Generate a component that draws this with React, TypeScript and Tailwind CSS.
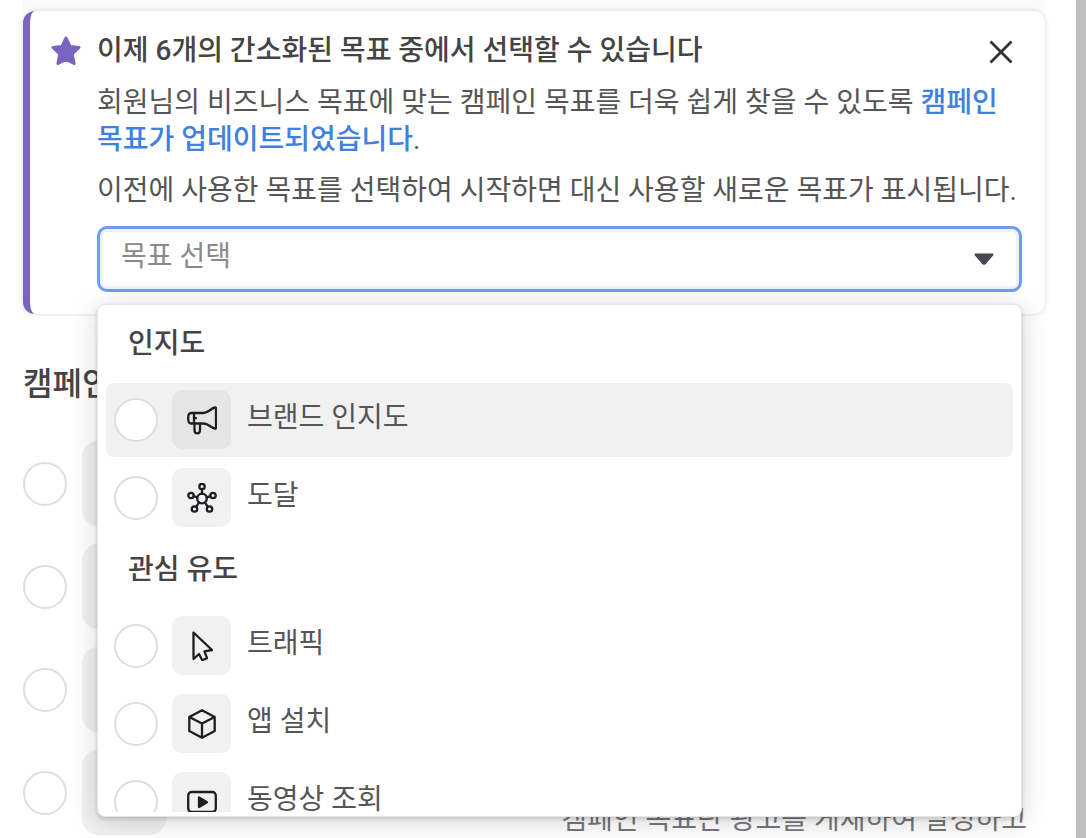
import { useState } from 'react'
import type { ReactNode } from 'react'

interface Objective {
  id: string
  label: string
  icon: ReactNode
}

interface ObjectiveGroup {
  title: string
  items: Objective[]
}

function LineIcon({ children }: { children: ReactNode }) {
  return (
    <svg
      viewBox="0 0 30 30"
      className="size-[30px]"
      fill="none"
      stroke="currentColor"
      strokeWidth={2.3}
      strokeLinecap="round"
      strokeLinejoin="round"
      aria-hidden="true"
    >
      {children}
    </svg>
  )
}

const groups: ObjectiveGroup[] = [
  {
    title: '인지도',
    items: [
      {
        id: 'brand',
        label: '브랜드 인지도',
        icon: (
          <LineIcon>
            <path d="M7 8h9.500c5 0 7.500-4.800 11.500-5.500q1-.2 1 1v19q0 1.200-1 1C24 22.800 21.500 18.500 16.500 18.500H4C2 18.500 1.200 16.500 1.200 13.200S2 8 4 8H7Zm0 0v10.500M7 13.200h2M7.500 18.500V25c0 4.500 5.500 4.500 5.500 0v-6.500" />
          </LineIcon>
        ),
      },
      {
        id: 'reach',
        label: '도달',
        icon: (
          <LineIcon>
            <circle cx="15" cy="15.500" r="4.800" />
            <circle cx="15" cy="3.500" r="2.700" />
            <circle cx="4" cy="12.500" r="2.700" />
            <circle cx="26" cy="12.500" r="2.700" />
            <circle cx="7.500" cy="26" r="2.700" />
            <circle cx="22.500" cy="26" r="2.700" />
            <path d="M15 6.200v4.500M6.700 13.200l3.600 1.100M23.300 13.200l-3.600 1.100M9.200 23.800l2.900-4.400M20.800 23.800l-2.900-4.400" />
          </LineIcon>
        ),
      },
    ],
  },
  {
    title: '관심 유도',
    items: [
      {
        id: 'traffic',
        label: '트래픽',
        icon: (
          <LineIcon>
            <path d="M6.500 1.500v26.500l5.500-5 3.300 6.200 4.700-2-2.500-6.800 7.500-1.400Z" />
          </LineIcon>
        ),
      },
      {
        id: 'app',
        label: '앱 설치',
        icon: (
          <LineIcon>
            <path d="M15 1.200 27.700 8v14L15 28.800 2.300 22V8ZM2.300 8 15 14.500 27.700 8M15 14.500v14.300" />
          </LineIcon>
        ),
      },
      {
        id: 'video',
        label: '동영상 조회',
        icon: (
          <LineIcon>
            <rect x="1.200" y="5" width="27.600" height="20" rx="3.500" />
            <path d="M12 10.500v9.500l8-4.700Z" fill="currentColor" />
          </LineIcon>
        ),
      },
    ],
  },
]

const campaignRows = [1, 2, 3, 4]

const radioClass = 'size-11 shrink-0 appearance-none rounded-full border-2 border-[#dedede] bg-white checked:border-[#1b74e4]'

function ObjectiveMenu({ highlighted, onHighlight }: { highlighted: string; onHighlight: (id: string) => void }) {
  return (
    <div className="absolute top-full left-0 right-0 z-10 mt-3 rounded-lg border border-[#e6e6e6] bg-white pb-1 shadow-[0_2px_4px_rgba(0,0,0,0.16),0_4px_28px_rgba(0,0,0,0.16)]">
      <div className="flex max-h-[507px] flex-col gap-1 overflow-hidden px-2 pt-2">
        {groups.map(group => (
          <section key={group.title} className="flex flex-col gap-1">
            <h3 className="flex h-[66px] shrink-0 items-center pb-1.5 pl-[22px] font-medium text-[#444]">{group.title}</h3>
            {group.items.map(item => {
              const active = item.id === highlighted
              return (
                <label
                  key={item.id}
                  onMouseEnter={() => onHighlight(item.id)}
                  className={`flex h-[74px] shrink-0 items-center rounded-lg px-2 pb-px ${active ? 'bg-[#f1f1f1]' : ''}`}
                >
                  <input type="radio" name="previous-objective" className={radioClass} />
                  <span
                    className={`ml-3.5 flex size-[59px] shrink-0 items-center justify-center rounded-[10px] text-[#1c1e21] ${
                      active ? 'bg-[#e5e5e5]' : 'bg-[#f1f1f1]'
                    }`}
                  >
                    {item.icon}
                  </span>
                  <span className="ml-4 pb-1">{item.label}</span>
                </label>
              )
            })}
          </section>
        ))}
      </div>
    </div>
  )
}

export default function App() {
  const [highlighted, setHighlighted] = useState('brand')

  return (
    <div className="flex h-screen overflow-hidden bg-white font-[Roboto,'Noto_Sans_CJK_KR',sans-serif] text-[28px] leading-[37px] text-[#555]">
      <main className="min-w-0 flex-1 pr-[31px] pl-[23px]">
        <div className="h-[11px] bg-[#fafafa]" />

        <section className="relative flex rounded-xl border-l-[7px] border-[#7b64c0] bg-white pt-[21px] pr-[23px] pb-[22px] pl-[21px] shadow-[0_0_5px_rgba(0,0,0,0.16)]">
          <svg viewBox="0 0 30 30" className="mt-1 size-[30px] shrink-0 text-[#7b64c0]" aria-hidden="true">
            <path
              d="m15 2 4 8.400 9 1-6.800 6.500 1.900 9.600L15 23.300l-8.100 4.200 1.900-9.600L2 11.400l9-1Z"
              fill="currentColor"
              stroke="currentColor"
              strokeWidth={3}
              strokeLinejoin="round"
            />
          </svg>

          <div className="ml-4 min-w-0 flex-1">
            <div className="flex justify-between">
              <h2 className="font-medium text-[#444]">이제 6개의 간소화된 목표 중에서 선택할 수 있습니다</h2>
              <button type="button" aria-label="닫기" className="mr-[7px] flex h-10 w-7 items-center justify-center">
                <svg viewBox="0 0 24 24" className="size-6" fill="none" stroke="#333" strokeWidth={2.8} aria-hidden="true">
                  <path d="m1.500 1.500 21 21M22.500 1.500l-21 21" />
                </svg>
              </button>
            </div>
            <p className="mt-3 break-keep">
              회원님의 비즈니스 목표에 맞는 캠페인 목표를 더욱 쉽게 찾을 수 있도록{' '}
              <a href="#update" className="font-medium text-[#4080e0]">캠페인 목표가 업데이트되었습니다</a>.
            </p>
            <p className="mt-3.5 -mr-4 break-keep">
              이전에 사용한 목표를 선택하여 시작하면 대신 사용할 새로운 목표가 표시됩니다.
            </p>

            <div className="relative mt-[17px]">
              <select
                aria-label="목표 선택"
                className="block h-[66px] w-full appearance-none rounded-[10px] border-[3px] border-[#6c9df0] bg-white pb-1.5 pl-[21px] text-[#8a8a8a] shadow-[inset_0_0_0_3px_#edf3fd] outline-none"
              >
                <option>목표 선택</option>
              </select>
              <svg
                viewBox="0 0 20 12"
                className="pointer-events-none absolute top-[27px] right-7 h-3 w-5"
                aria-hidden="true"
              >
                <path
                  d="M1.500 1.500h17L11 10.300c-.6.700-1.400.700-2 0Z"
                  fill="#444950"
                  stroke="#444950"
                  strokeWidth={2}
                  strokeLinejoin="round"
                />
              </svg>
              <ObjectiveMenu highlighted={highlighted} onHighlight={setHighlighted} />
            </div>
          </div>
        </section>

        <h2 className="mt-[50px] text-[32px] leading-10 font-medium text-[#444]">캠페인 목표 선택</h2>
        <div className="mt-[37px] flex items-end justify-between">
          <ul className="flex flex-col gap-[18px] pb-[3px]">
            {campaignRows.map(row => (
              <li key={row} className="flex items-center gap-[15px]">
                <input type="radio" name="campaign-objective" aria-label={`목표 ${row}`} className={radioClass} />
                <span className="h-[85px] w-[84px] rounded-2xl bg-[#f1f1f1]" />
              </li>
            ))}
          </ul>
          <p className="mr-[18px] text-[#777]">캠페인 목표란 광고를 게재하여 달성하고</p>
        </div>
      </main>
      <div className="w-2.5 shrink-0 bg-[#bfbfbf]" />
    </div>
  )
}
